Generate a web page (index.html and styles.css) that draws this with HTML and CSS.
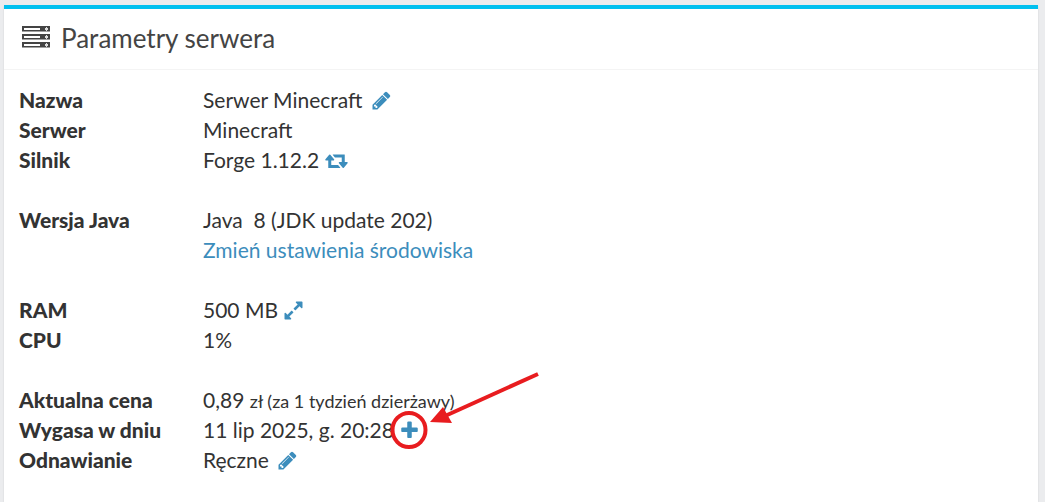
FILE: index.html
```html
<!DOCTYPE html>
<html lang="pl">
<head>
    <meta charset="UTF-8">
    <meta name="viewport" content="width=device-width, initial-scale=1.0">
    <title>Parametry serwera</title>
    <link rel="stylesheet" href="styles.css">
</head>
<body>
    <!-- Ikony -->
    <svg class="icon-defs" aria-hidden="true">
        <symbol id="icon-pencil" viewBox="0 0 1792 1792">
            <path d="M491 1536l91-91-235-235-91 91v107h128v128h107zm523-928q0-22-22-22-10 0-17 7l-542 542q-7 7-7 17 0 22 22 22 10 0 17-7l542-542q7-7 7-17zm-54-192l416 416-832 832h-416v-416zm683 96q0 53-37 90l-166 166-416-416 166-165q36-38 90-38 53 0 91 38l235 234q37 39 37 91z"/>
        </symbol>
        <symbol id="icon-retweet" viewBox="0 0 1920 1792">
            <path d="M1280 1504q0 13-9.500 22.500t-22.500 9.500h-960q-8 0-13.500-2t-9-7-5.500-8-3-11.500-1-11.500v-600h-192q-26 0-45-19t-19-45q0-24 15-41l320-384q19-22 49-22t49 22l320 384q15 17 15 41 0 26-19 45t-45 19h-192v384h576q16 0 25 11l160 192q7 10 7 21zm640-416q0 24-15 41l-320 384q-20 23-49 23t-49-23l-320-384q-15-17-15-41 0-26 19-45t45-19h192v-384h-576q-16 0-25-12l-160-192q-7-9-7-20 0-13 9.500-22.500t22.500-9.500h960q8 0 13.500 2t9 7 5.500 8 3 11.500 1 11.500v600h192q26 0 45 19t19 45z"/>
        </symbol>
        <symbol id="icon-expand" viewBox="0 0 1792 1792">
            <path d="M883 1056q0 13-10 23l-332 332 144 144q19 19 19 45t-19 45-45 19h-448q-26 0-45-19t-19-45v-448q0-26 19-45t45-19 45 19l144 144 332-332q10-10 23-10t23 10l114 114q10 10 10 23zm781-864v448q0 26-19 45t-45 19-45-19l-144-144-332 332q-10 10-23 10t-23-10l-114-114q-10-10-10-23t10-23l332-332-144-144q-19-19-19-45t19-45 45-19h448q26 0 45 19t19 45z"/>
        </symbol>
        <symbol id="icon-plus" viewBox="0 0 1792 1792">
            <path d="M1600 736v192q0 40-28 68t-68 28h-416v416q0 40-28 68t-68 28h-192q-40 0-68-28t-28-68v-416h-416q-40 0-68-28t-28-68v-192q0-40 28-68t68-28h416v-416q0-40 28-68t68-28h192q40 0 68 28t28 68v416h416q40 0 68 28t28 68z"/>
        </symbol>
    </svg>

    <section class="box">
        <header class="box-header">
            <svg class="server-icon" viewBox="0 0 28 22" aria-hidden="true">
                <path d="M0 0h28v5.500H0zM0 8h28v5.500H0zM0 16h28v5.500H0z"/>
                <path class="server-slot" d="M2 2h16v2H2zM2 10h16v2H2zM2 18h16v2H2z"/>
                <path class="server-led" d="M23 2h3v2h-3zM24 1h1v4h-1zM23 10h3v2h-3zM24 9h1v4h-1zM23 18h3v2h-3zM24 17h1v4h-1z"/>
            </svg>
            <h1 class="box-title">Parametry serwera</h1>
        </header>

        <div class="box-body">
            <dl class="params">
                <dt>Nazwa</dt>
                <dd>Serwer Minecraft <a class="action action-edit" href="#" aria-label="Zmień nazwę"><svg class="icon"><use href="#icon-pencil"/></svg></a></dd>
                <dt>Serwer</dt>
                <dd>Minecraft</dd>
                <dt>Silnik</dt>
                <dd>Forge 1.12.2 <a class="action" href="#" aria-label="Zmień silnik"><svg class="icon icon-wide"><use href="#icon-retweet"/></svg></a></dd>
            </dl>

            <dl class="params">
                <dt>Wersja Java</dt>
                <dd>Java &nbsp;8 (JDK update 202)<br><a href="#">Zmień ustawienia środowiska</a></dd>
            </dl>

            <dl class="params">
                <dt>RAM</dt>
                <dd>500 MB <a class="action" href="#" aria-label="Zmień ilość RAM"><svg class="icon"><use href="#icon-expand"/></svg></a></dd>
                <dt>CPU</dt>
                <dd>1%</dd>
            </dl>

            <dl class="params">
                <dt>Aktualna cena</dt>
                <dd>0,89 <small>zł (za 1 tydzień dzierżawy)</small></dd>
                <dt>Wygasa w dniu</dt>
                <dd>11 lip 2025, g. 20:28 <a class="action" href="#" aria-label="Przedłuż"><svg class="icon"><use href="#icon-plus"/></svg><svg class="marker" viewBox="0 0 152 80" aria-hidden="true">
                    <ellipse cx="20" cy="59" rx="16.500" ry="17"/>
                    <path d="M149 3L56 45"/>
                    <path class="marker-head" d="M41 51L54 36L63 52z"/>
                </svg></a></dd>
                <dt>Odnawianie</dt>
                <dd>Ręczne <a class="action action-edit" href="#" aria-label="Zmień odnawianie"><svg class="icon"><use href="#icon-pencil"/></svg></a></dd>
            </dl>
        </div>
    </section>
</body>
</html>
```

FILE: styles.css
```css
* {
    box-sizing: border-box;
}

body {
    margin: 0;
    padding: 5px 7px 0 4px;
    background: #ebecee;
    color: #333;
    font-family: Lato, sans-serif;
    font-size: 21px;
    line-height: 30px;
}

a {
    color: #3c8dbc;
    text-decoration: none;
}

.icon-defs {
    position: absolute;
    width: 0;
    height: 0;
}

.box {
    background: #fff;
    border-top: 4px solid #00c0ef;
    box-shadow: 0 1px 2px rgba(0, 0, 0, 0.1);
}

.box-header {
    display: flex;
    align-items: center;
    gap: 11px;
    padding: 14px 18px 16px;
    border-bottom: 1px solid #f4f4f4;
    color: #444;
}

.server-icon {
    width: 28px;
    height: 22px;
    margin-bottom: 2px;
    fill: currentColor;
}

.server-slot {
    fill: #fff;
}

.server-led {
    fill: #ddd;
}

.box-title {
    margin: 0;
    font-size: 26px;
    font-weight: 400;
    line-height: 30px;
}

.box-body {
    display: flex;
    flex-direction: column;
    gap: 30px;
    padding: 15px 15px 27px;
}

.params {
    display: grid;
    grid-template-columns: 184px 1fr;
    margin: 0;
}

.params dt {
    font-family: "Lato Black", Lato, sans-serif;
    font-weight: 900;
}

.params dd {
    margin: 0;
}

.params small {
    font-size: 18px;
    line-height: 1;
}

.action {
    position: relative;
}

.action-edit {
    margin-left: 3px;
}

.icon {
    width: 21px;
    height: 21px;
    fill: currentColor;
    vertical-align: -3px;
}

.icon-wide {
    width: 23px;
}

/* wyróżnienie przycisku przedłużenia */
.marker {
    position: absolute;
    left: -10px;
    bottom: -9px;
    width: 152px;
    height: 80px;
    fill: none;
    stroke: #e81c1f;
    stroke-width: 4px;
    pointer-events: none;
}

.marker .marker-head {
    fill: #e81c1f;
    stroke: none;
}
```
